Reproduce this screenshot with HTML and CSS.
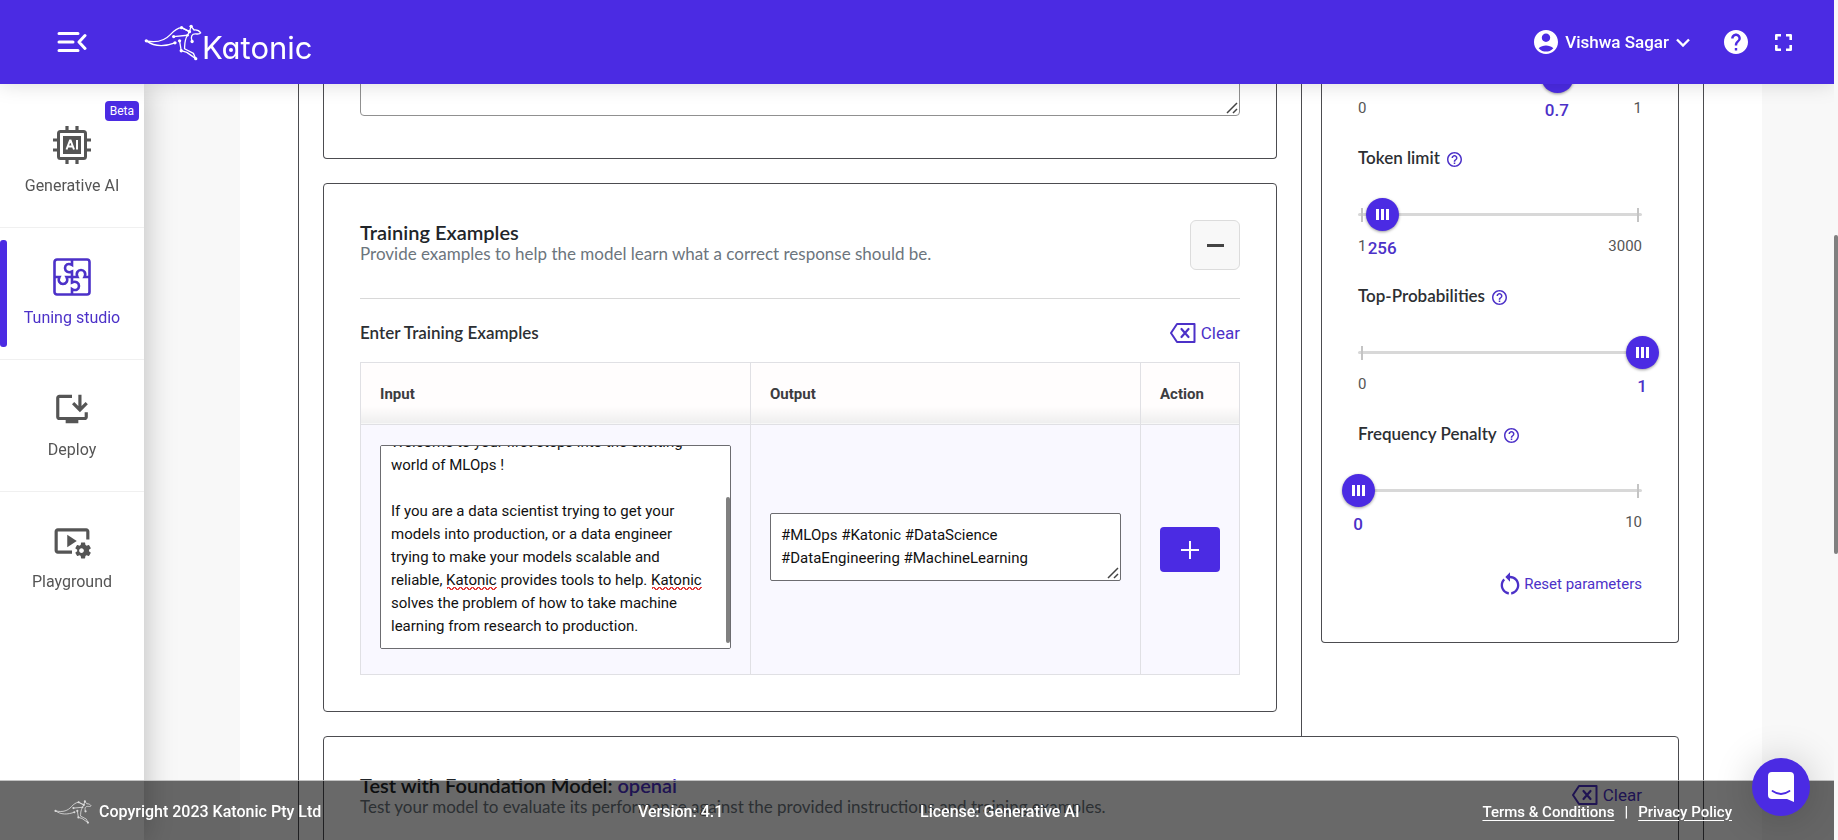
FILE: index.html
```html
<!DOCTYPE html>
<html lang="en">
<head>
<meta charset="utf-8">
<meta name="viewport" content="width=device-width, initial-scale=1">
<title>Katonic - Tuning studio</title>
<link rel="stylesheet" href="styles.css">
</head>
<body>
<svg class="sprite" aria-hidden="true">
  <symbol id="kangaroo" viewBox="430 70 176 110">
    <g fill="none" stroke="currentColor" stroke-width="4" stroke-linecap="round" stroke-linejoin="round">
      <path d="M437 120C462 138 492 138 524 126"/>
      <path d="M437 120C474 128 494 118 510 101C522 88 532 81 544 80L568 92"/>
      <path d="M520 107L562 103L568 92L544 80"/>
      <path d="M573 76L582 87C590 86 598 90 602 96C598 101 592 99 586 99C576 99 570 106 576 122"/>
      <path d="M573 76L568 92"/>
      <path d="M538 120L543 150L560 155L587 174"/>
      <path d="M562 103C552 118 554 134 553 144L580 158L587 174"/>
    </g>
    <g fill="currentColor">
      <circle cx="437" cy="120" r="5"/><circle cx="524" cy="126" r="5"/><circle cx="520" cy="107" r="5"/>
      <circle cx="544" cy="80" r="5"/><circle cx="573" cy="76" r="5"/><circle cx="568" cy="92" r="5"/>
      <circle cx="562" cy="103" r="4"/><circle cx="538" cy="120" r="5"/><circle cx="543" cy="150" r="5"/>
      <circle cx="576" cy="122" r="5"/><circle cx="587" cy="174" r="5"/>
    </g>
  </symbol>
  <symbol id="help-outline" viewBox="2 2 20 20">
    <path fill="currentColor" d="M11 18h2v-2h-2v2zm1-16C6.48 2 2 6.48 2 12s4.480 10 10 10 10-4.480 10-10S17.520 2 12 2zm0 18c-4.410 0-8-3.590-8-8s3.590-8 8-8 8 3.590 8 8-3.590 8-8 8zm0-14c-2.210 0-4 1.790-4 4h2c0-1.100.9-2 2-2s2 .9 2 2c0 2-3 1.750-3 5h2c0-2.250 3-2.500 3-5 0-2.210-1.790-4-4-4z"/>
  </symbol>
  <symbol id="clear" viewBox="0 0 26 20">
    <g fill="none" stroke="currentColor" stroke-width="2" stroke-linejoin="round" stroke-linecap="round">
      <path d="M7 1H24.500V19H7L1 10Z"/>
      <path d="M11.500 6L18.500 14M18.500 6L11.500 14" stroke-width="2.200"/>
    </g>
  </symbol>
  <symbol id="grip" viewBox="0 0 12 12">
    <path d="M1 11L11 1M7 11L11 7" fill="none" stroke="#444" stroke-width="1.500"/>
  </symbol>
</svg>

<header class="topbar">
  <button class="icon-btn menu-btn" type="button" aria-label="Collapse menu">
    <svg width="30" height="22" viewBox="0 0 30 22" fill="none" stroke="currentColor" stroke-width="3" stroke-linecap="round" stroke-linejoin="round"><path d="M2 2.500H21M2 11H16M2 19.500H21M28 4.500L22 11L28 17.500"/></svg>
  </button>
  <a class="brand" href="#" aria-label="Katonic home">
    <svg class="brand-mark" aria-hidden="true"><use href="#kangaroo"/></svg>
    <span class="brand-name">Katonic</span>
  </a>
  <div class="topbar-actions">
    <button class="user-btn" type="button">
      <svg width="24" height="24" viewBox="2 2 20 20"><path fill="currentColor" d="M12 2C6.480 2 2 6.480 2 12s4.480 10 10 10 10-4.480 10-10S17.520 2 12 2zm0 3c1.930 0 3.500 1.570 3.500 3.500S13.930 12 12 12s-3.500-1.570-3.500-3.500S10.070 5 12 5zm0 15c-2.030 0-4.430-.82-6.140-2.880C7.550 15.800 9.680 15 12 15s4.450.8 6.140 2.120C16.430 19.180 14.030 20 12 20z"/></svg>
      <span>Vishwa Sagar</span>
      <svg width="14" height="9" viewBox="0 0 14 9" fill="none" stroke="currentColor" stroke-width="2.400"><path d="M1 1.500L7 7.500L13 1.500"/></svg>
    </button>
    <button class="icon-btn" type="button" aria-label="Help">
      <svg width="24" height="24" viewBox="2 2 20 20"><path fill="currentColor" d="M12 2C6.480 2 2 6.480 2 12s4.480 10 10 10 10-4.480 10-10S17.520 2 12 2zm1 17h-2v-2h2v2zm2.070-7.750l-.9.920C13.450 12.900 13 13.500 13 15h-2v-.5c0-1.100.45-2.100 1.170-2.830l1.240-1.260c.37-.36.59-.86.59-1.410 0-1.100-.9-2-2-2s-2 .9-2 2H8c0-2.210 1.790-4 4-4s4 1.790 4 4c0 .88-.36 1.680-.93 2.250z"/></svg>
    </button>
    <button class="icon-btn" type="button" aria-label="Full screen">
      <svg width="17" height="17" viewBox="0 0 17 17" fill="none" stroke="currentColor" stroke-width="2.600" stroke-linejoin="round"><path d="M1.300 6V1.300H6M11 1.300H15.700V6M15.700 11V15.700H11M6 15.700H1.300V11"/></svg>
    </button>
  </div>
</header>

<nav class="sidebar" aria-label="Main">
  <a class="nav-item" href="#">
    <span class="nav-badge">Beta</span>
    <span class="nav-icon">
      <svg width="38" height="38" viewBox="0 0 38 38" fill="none" stroke="currentColor"><rect x="5.500" y="5.500" width="27" height="27" rx="2" stroke-width="3"/><rect x="10" y="10" width="18" height="18" fill="currentColor" stroke="none"/><path stroke-width="3.200" d="M14 0V5M24 0V5M14 33V38M24 33V38M0 14H5M0 24H5M33 14H38M33 24H38"/><path stroke="#fff" stroke-width="2" d="M13.500 23.500L17 14.500H17.600L21 23.500M14.800 20.500H19.800M24 14V23.500"/></svg>
    </span>
    <span>Generative AI</span>
  </a>
  <a class="nav-item active" href="#" aria-current="page">
    <span class="nav-icon">
      <svg width="38" height="38" viewBox="0 0 38 38" fill="none" stroke="currentColor" stroke-width="2.600"><rect x="1.500" y="1.500" width="35" height="35" rx="2.500"/><path d="M19 2V7C15 4.500 12 7 12 10C12 13 15 15.500 19 13.500V24.500C23 22.500 26 25 26 28C26 31 23 33.500 19 31V36"/><path d="M2 19H6.500C4.500 23 7 26 10 26C13 26 15.500 23 13.500 19H24.500C22.500 15 25 12 28 12C31 12 33.500 15 31.500 19H36"/></svg>
    </span>
    <span>Tuning studio</span>
  </a>
  <a class="nav-item" href="#">
    <span class="nav-icon">
      <svg width="38" height="38" viewBox="0 0 24 24" fill="currentColor"><path d="M20 17H4V5h8V3H4c-1.100 0-2 .9-2 2v12c0 1.100.9 2 2 2h4v2h8v-2h4c1.100 0 2-.9 2-2v-3h-2v3z"/><path d="M17 14l5-5-1.410-1.410L18 10.170V3h-2v7.170l-2.590-2.580L12 9z"/></svg>
    </span>
    <span>Deploy</span>
  </a>
  <a class="nav-item" href="#">
    <span class="nav-icon">
      <svg width="38" height="38" viewBox="0 0 24 24" fill="currentColor"><path d="M3 6h18v5h2V6c0-1.100-.9-2-2-2H3c-1.100 0-2 .9-2 2v12c0 1.100.9 2 2 2h9v-2H3V6z"/><path d="M15 12L9 8v8z"/><path d="M22.710 18.430c.03-.29.04-.58.01-.86l1.070-.85c.1-.08.12-.21.06-.32l-1.030-1.790c-.06-.11-.19-.15-.31-.11l-1.280.5c-.23-.17-.48-.31-.75-.42l-.2-1.360c-.02-.13-.12-.22-.25-.22h-2.070c-.12 0-.23.09-.25.21l-.2 1.360c-.26.11-.51.26-.74.42l-1.280-.5c-.12-.05-.25 0-.31.11l-1.030 1.790c-.06.11-.04.24.06.32l1.070.86c-.03.29-.04.58-.01.86l-1.070.85c-.1.08-.12.21-.06.32l1.030 1.790c.06.11.19.15.31.11l1.270-.5c.23.17.48.31.75.42l.2 1.360c.02.12.12.21.25.21h2.070c.12 0 .23-.09.25-.21l.2-1.360c.26-.11.51-.26.74-.42l1.280.5c.12.05.25 0 .31-.11l1.030-1.790c.06-.11.04-.24-.06-.32l-1.060-.86zM18 19.500c-.83 0-1.500-.67-1.500-1.500s.67-1.500 1.500-1.500 1.500.67 1.500 1.500-.67 1.500-1.500 1.500z"/></svg>
    </span>
    <span>Playground</span>
  </a>
</nav>

<main class="page">
  <div class="panel">
    <div class="columns">
      <div class="forms">
        <section class="card card-instructions">
          <div class="field">
            <textarea class="instructions" rows="4" aria-label="Instructions"></textarea>
            <svg class="grip" aria-hidden="true"><use href="#grip"/></svg>
          </div>
        </section>

        <section class="card">
          <div class="card-head">
            <div>
              <h2 class="card-title">Training Examples</h2>
              <p class="card-sub">Provide examples to help the model learn what a correct response should be.</p>
            </div>
            <button class="collapse-btn" type="button" aria-label="Collapse training examples"><span class="minus"></span></button>
          </div>
          <div class="section-row">
            <h3 class="section-title">Enter Training Examples</h3>
            <button class="link-btn" type="button"><svg width="26" height="20" aria-hidden="true"><use href="#clear"/></svg>Clear</button>
          </div>
          <table class="examples">
            <thead>
              <tr><th scope="col">Input</th><th scope="col">Output</th><th scope="col" class="col-action">Action</th></tr>
            </thead>
            <tbody>
              <tr>
                <td>
                  <div class="field">
                    <textarea id="example-input" class="example-text tall" aria-label="Input" spellcheck="false">



Welcome to your first steps into the exciting
world of MLOps !

If you are a data scientist trying to get your
models into production, or a data engineer
trying to make your models scalable and
reliable, Katonic provides tools to help. Katonic
solves the problem of how to take machine
learning from research to production.</textarea>
                    <span class="squiggle squiggle-first"></span>
                    <span class="squiggle squiggle-second"></span>
                    <span class="field-scroll"></span>
                  </div>
                </td>
                <td>
                  <div class="field">
                    <textarea class="example-text" rows="2" aria-label="Output" spellcheck="false">#MLOps #Katonic #DataScience
#DataEngineering #MachineLearning</textarea>
                    <svg class="grip" aria-hidden="true"><use href="#grip"/></svg>
                  </div>
                </td>
                <td class="cell-action">
                  <button class="add-btn" type="button" aria-label="Add example"><svg width="18" height="18" viewBox="0 0 18 18" stroke="currentColor" stroke-width="2"><path d="M9 0V18M0 9H18"/></svg></button>
                </td>
              </tr>
            </tbody>
          </table>
        </section>
      </div>

      <aside class="params">
        <div class="card params-card">
          <div class="param">
            <label class="param-label" for="temperature">Temperature <svg class="hint"><use href="#help-outline"/></svg></label>
            <div class="slider"><input id="temperature" type="range" min="0" max="1" step="0.1" value="0.7"></div>
            <div class="scale"><span>0</span><span>1</span><output class="value" for="temperature" style="left:70%">0.7</output></div>
          </div>
          <div class="param">
            <label class="param-label" for="tokens">Token limit <svg class="hint"><use href="#help-outline"/></svg></label>
            <div class="slider"><input id="tokens" type="range" min="1" max="3000" value="256"></div>
            <div class="scale"><span>1</span><span>3000</span><output class="value" for="tokens" style="left:8.500%">256</output></div>
          </div>
          <div class="param">
            <label class="param-label" for="topp">Top-Probabilities <svg class="hint"><use href="#help-outline"/></svg></label>
            <div class="slider"><input id="topp" type="range" min="0" max="1" step="0.1" value="1"></div>
            <div class="scale"><span>0</span><output class="value" for="topp" style="left:100%">1</output></div>
          </div>
          <div class="param">
            <label class="param-label" for="penalty">Frequency Penalty <svg class="hint"><use href="#help-outline"/></svg></label>
            <div class="slider"><input id="penalty" type="range" min="0" max="10" value="0"></div>
            <div class="scale scale-end"><span>10</span><output class="value" for="penalty" style="left:0%">0</output></div>
          </div>
          <button class="reset-btn" type="button">
            <svg width="28" height="28" viewBox="0 0 24 24" fill="currentColor"><path d="M12 5V2L8 6l4 4V7c3.310 0 6 2.690 6 6 0 2.970-2.170 5.430-5 5.910v2.020c3.950-.49 7-3.850 7-7.930 0-4.420-3.580-8-8-8zM6 13c0-1.650.67-3.150 1.760-4.240L6.340 7.340C4.900 8.790 4 10.790 4 13c0 4.080 3.050 7.440 7 7.930v-2.020c-2.830-.48-5-2.940-5-5.910z"/></svg>Reset parameters
          </button>
        </div>
      </aside>
    </div>

    <section class="card card-test">
      <div class="card-head">
        <div>
          <h2 class="card-title">Test with Foundation Model: <span class="accent">openai</span></h2>
          <p class="card-sub">Test your model to evaluate its performance against the provided instructions and training examples.</p>
        </div>
        <button class="link-btn" type="button"><svg width="26" height="20" aria-hidden="true"><use href="#clear"/></svg>Clear</button>
      </div>
    </section>
  </div>
</main>

<footer class="footer">
  <div class="footer-brand"><svg class="footer-mark" aria-hidden="true"><use href="#kangaroo"/></svg>Copyright 2023 Katonic Pty Ltd</div>
  <div>Version: 4.1</div>
  <div>License: Generative AI</div>
  <div class="footer-links"><a href="#">Terms &amp; Conditions</a><span>|</span><a href="#">Privacy Policy</a></div>
</footer>

<button class="chat-btn" type="button" aria-label="Open chat">
  <svg width="26" height="30" viewBox="0 0 26 30"><path fill="#fff" d="M4 0H22Q26 0 26 4V30L19 27H4Q0 27 0 23V4Q0 0 4 0Z"/><path d="M4.500 19Q13 25 21.500 19" fill="none" stroke="#4b2be3" stroke-width="1.800" stroke-linecap="round"/></svg>
</button>
<div class="page-scroll" aria-hidden="true"><span class="page-scroll-thumb"></span></div>
<script src="app.js"></script>
</body>
</html>
```
FILE: styles.css
```css
:root {
  --brand: #4b2be3;
  --link: #4c31c8;
  --line: #4c4c50;
  --rail: 4px;
}
*, *::before, *::after { box-sizing: border-box; }
body {
  margin: 0;
  background: #f8f8f8;
  color: #212529;
  font-family: Roboto, "Liberation Sans", sans-serif;
  font-size: 16px;
  line-height: 24px;
  height: 100vh;
  overflow: hidden;
}
h2, h3, p { margin: 0; }
button { font: inherit; border: 0; background: none; padding: 0; cursor: pointer; }
svg { display: block; flex: none; }
.sprite { position: absolute; width: 0; height: 0; }

.topbar {
  position: fixed;
  top: 0; left: 0; right: var(--rail);
  z-index: 10;
  height: 84px;
  padding: 0 42px 0 57px;
  display: flex;
  align-items: center;
  background: var(--brand);
  color: #fff;
  box-shadow: 0 0 20px rgba(0, 0, 0, .15);
}
.icon-btn { color: inherit; }
.brand { display: flex; align-items: center; margin-left: 57px; color: #fff; text-decoration: none; }
.brand-mark { width: 58px; height: 37px; }
.brand-name {
  position: relative;
  padding-top: 12px;
  font: 400 31px/36px Inter, sans-serif;
  font-feature-settings: "cv11";
}
.brand-name::after {
  content: "";
  position: absolute;
  left: 27px; top: 30px;
  width: 4px; height: 4px;
  border-radius: 50%;
  background: #fff;
}
.topbar-actions { display: flex; align-items: center; margin-left: auto; }
.user-btn { display: flex; align-items: center; gap: 7px; color: #fff; font-size: 17px; font-weight: 500; margin-right: 34px; }
.topbar-actions .icon-btn + .icon-btn { margin-left: 27px; }

.sidebar {
  position: fixed;
  top: 84px; bottom: 0; left: 0;
  z-index: 5;
  width: 144px;
  padding-top: 12px;
  background: #fff;
  box-shadow: 0 0 30px rgba(0, 0, 0, .25);
}
.nav-item {
  position: relative;
  display: flex;
  flex-direction: column;
  align-items: center;
  gap: 9px;
  height: 132px;
  padding-top: 29px;
  border-bottom: 1px solid #f0f0f0;
  color: #555;
  text-decoration: none;
}
.nav-item:last-child { border-bottom: 0; }
.nav-item.active { color: var(--link); }
.nav-item.active::before {
  content: "";
  position: absolute;
  left: 0; top: 12px; bottom: 12px;
  width: 7px;
  border-radius: 3px;
  background: var(--brand);
}
.nav-icon { display: grid; place-items: center; height: 40px; }
.nav-badge {
  position: absolute;
  top: 5px; right: 5px;
  padding: 0 5px;
  border-radius: 4px;
  background: var(--brand);
  color: #fff;
  font-size: 12px;
  line-height: 20px;
}

.page { height: 100vh; overflow: hidden; margin: 0 76px 0 240px; padding: 0 58px; background: #fff; }
.panel { border: solid var(--line); border-width: 0 1px; padding: 0 24px; }
.columns { display: grid; grid-template-columns: minmax(0, 1fr) 378px; column-gap: 24px; }
.forms { display: flex; flex-direction: column; gap: 24px; padding-bottom: 24px; }
.card { border: 1px solid var(--line); border-radius: 4px; padding: 36px; background: #fff; }
.card-instructions { border-top: 0; padding-top: 0; padding-bottom: 42px; }
.instructions { display: block; width: 100%; height: 116px; border: 1px solid #909090; border-radius: 4px; resize: none; }
.grip { position: absolute; right: 2px; bottom: 2px; width: 12px; height: 12px; }
.card-head { display: flex; justify-content: space-between; align-items: center; min-height: 50px; }
.card-title { font: 600 20px/22px Lato, sans-serif; }
.card-sub { font: 400 17px/22px Lato, sans-serif; color: #6c757d; padding-bottom: 4px; }
.accent { color: var(--link); }
.collapse-btn {
  display: grid;
  place-items: center;
  width: 50px; height: 50px;
  border: 1px solid #dcdcdc;
  border-radius: 6px;
  background: #f8f8f8;
}
.minus { width: 17px; height: 3px; background: #444; }
.section-row {
  display: flex;
  justify-content: space-between;
  align-items: center;
  margin: 28px 0 15px;
  padding-top: 20px;
  border-top: 1px solid #d8d8d8;
}
.section-title { font: 600 17px/28px Lato, sans-serif; color: #2c2f33; }
.link-btn { display: flex; align-items: center; gap: 5px; font-size: 17px; line-height: 28px; color: var(--link); }

.examples { width: 100%; border-collapse: collapse; table-layout: fixed; }
.examples th, .examples td { border: 1px solid #e0e0e4; padding: 0 19px; text-align: left; }
.examples th {
  height: 62px;
  background: linear-gradient(#fffdfd 70%, #eee 98%, #fff 98%);
  font-size: 15px;
  font-weight: 700;
  color: #3c3c40;
}
.examples td { padding: 20px 19px 25px; background: #f9f8ff; vertical-align: middle; }
.examples td.cell-action { padding-bottom: 20px; }
.examples .col-action { width: 99px; }
.field { position: relative; }
.example-text {
  display: block;
  width: 100%;
  padding: 10px;
  border: 1px solid #6c6c70;
  border-radius: 2px;
  background: #fff;
  color: #111;
  font: 400 15px/23px Roboto, sans-serif;
  resize: none;
  overflow: hidden;
}
.example-text.tall { height: 204px; overflow-y: auto; scrollbar-width: none; }
.squiggle {
  position: absolute;
  height: 4px;
  width: 50px;
  background:
    linear-gradient(45deg, transparent 40%, #e03c3c 40% 60%, transparent 60%) 0 0 / 6px 3px,
    linear-gradient(-45deg, transparent 40%, #e03c3c 40% 60%, transparent 60%) 3px 0 / 6px 3px;
  background-repeat: repeat-x;
}
.squiggle-first { left: 67px; top: 142px; }
.squiggle-second { left: 272px; top: 142px; }
.field-scroll { position: absolute; right: 1px; top: 52px; bottom: 6px; width: 4px; border-radius: 2px; background: #808080; }
.add-btn {
  display: grid;
  place-items: center;
  width: 60px; height: 45px;
  border-radius: 4px;
  background: var(--brand);
  color: #fff;
}

.params { border-left: 1px solid var(--line); padding-left: 19px; }
.params-card { border-top: 0; padding-top: 8px; padding-bottom: 44px; }
.param { padding-bottom: 28px; }
.param-label { display: flex; align-items: center; gap: 7px; font: 600 17px/24px Lato, sans-serif; color: #2c2f33; }
.hint { width: 15px; height: 15px; color: var(--link); margin-top: 2px; }
.slider { position: relative; height: 33px; margin-top: 28px; }
.slider::before {
  content: "";
  position: absolute;
  inset: 15px 0 auto;
  height: 3px;
  border-radius: 2px;
  background: #d8d8d8;
}
.slider::after {
  content: "";
  position: absolute;
  inset: 10px 3px auto;
  height: 14px;
  border: solid #c4c4c4;
  border-width: 0 2px;
}
.slider input {
  position: relative;
  z-index: 1;
  display: block;
  width: calc(100% + 33px);
  height: 33px;
  margin: 0 -16px;
  background: none;
  -webkit-appearance: none;
  appearance: none;
}
.slider input::-webkit-slider-thumb {
  -webkit-appearance: none;
  width: 33px;
  height: 33px;
  border-radius: 50%;
  background:
    linear-gradient(90deg, #fff 3px, transparent 3px 5px, #fff 5px 8px, transparent 8px 10px, #fff 10px) center / 13px 11px no-repeat,
    var(--brand);
  box-shadow: 0 1px 3px rgba(0, 0, 0, .4);
}
.scale { position: relative; display: flex; justify-content: space-between; margin-top: 5px; font-size: 15px; line-height: 20px; color: #555; }
.scale-end { justify-content: flex-end; }
.value { position: absolute; top: 2px; transform: translateX(-50%); font-size: 17px; font-weight: 500; color: var(--link); }
.reset-btn { display: flex; align-items: center; margin: 10px 0 0 auto; font-size: 15px; line-height: 28px; color: var(--link); }

.card-test { min-height: 180px; }
.card-test .link-btn { align-self: flex-start; padding-top: 8px; }

.footer {
  position: fixed;
  left: 0; right: var(--rail); bottom: 0;
  z-index: 20;
  display: grid;
  grid-template-columns: 584fr 282fr 160fr 652fr;
  align-items: center;
  height: 60px;
  padding: 2px 102px 0 54px;
  border-top: 1px solid rgba(255, 255, 255, .6);
  background: rgba(0, 0, 0, .59);
  color: #fff;
  font-weight: 500;
  white-space: nowrap;
}
.footer-brand { display: flex; align-items: center; gap: 7px; }
.footer-mark { width: 38px; height: 24px; opacity: .75; }
.footer-links { display: flex; justify-content: flex-end; gap: 10px; font-size: 15px; }
.footer-links a { color: inherit; text-underline-offset: 3px; }

.chat-btn {
  position: fixed;
  right: 28px; bottom: 24px;
  z-index: 30;
  display: grid;
  place-items: center;
  width: 58px; height: 58px;
  border-radius: 50%;
  background: var(--brand);
  box-shadow: 0 2px 40px rgba(0, 0, 0, .2);
}
.page-scroll { position: fixed; top: 0; right: 0; bottom: 0; z-index: 40; width: var(--rail); background: #f8f8f8; }
.page-scroll-thumb { position: absolute; inset: 28% 0 auto; height: 38%; border-radius: 2px; background: #808080; }
```
FILE: app.js
```js
const input = document.getElementById("example-input");
input.scrollTop = input.scrollHeight;
```
